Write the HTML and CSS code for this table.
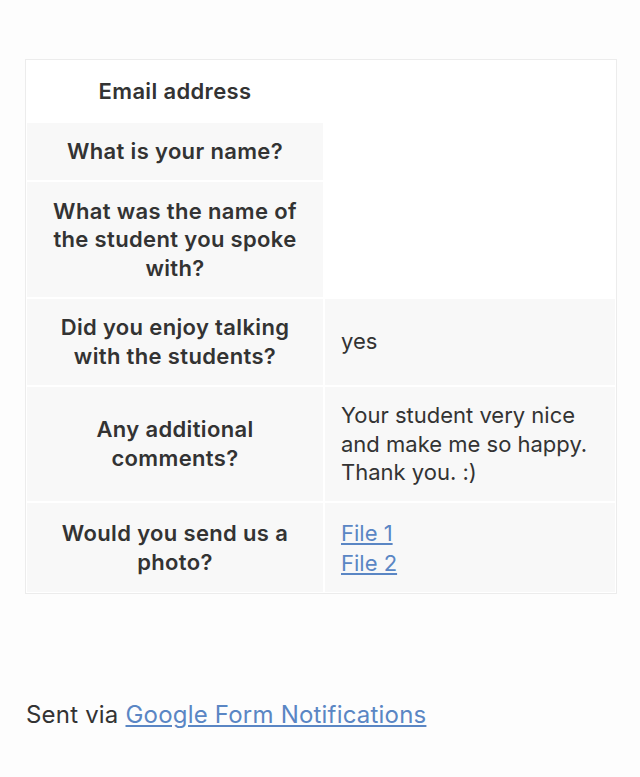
FILE: index.html
```html
<!DOCTYPE html>
<html>
<head>
<meta charset="utf-8">
<link rel="stylesheet" href="styles.css">
</head>
<body>
<div class="page">
  <div class="card">
    <table class="responses">
      <colgroup>
        <col class="col-label">
        <col class="col-value">
      </colgroup>
      <tr class="row-white">
        <th>Email address</th>
        <td></td>
      </tr>
      <tr class="row-half">
        <th>What is your name?</th>
        <td></td>
      </tr>
      <tr class="row-half">
        <th>What was the name of the student you spoke with?</th>
        <td></td>
      </tr>
      <tr>
        <th>Did you enjoy talking with the students?</th>
        <td>yes</td>
      </tr>
      <tr>
        <th>Any additional comments?</th>
        <td>Your student very nice and make me so happy. Thank you. :)</td>
      </tr>
      <tr>
        <th>Would you send us a photo?</th>
        <td class="files"><a href="#">File 1</a><br><a href="#">File 2</a></td>
      </tr>
    </table>
  </div>
  <p class="footer">Sent via <a href="#">Google Form Notifications</a></p>
</div>
</body>
</html>
```
FILE: styles.css
```css
html, body {
  margin: 0;
  padding: 0;
  background: #fdfdfd;
}
body {
  font-family: Inter, "Helvetica Neue", Arial, sans-serif;
  color: #333333;
}
.page {
  padding: 59px 23px 0 25px;
}
.card {
  border: 1px solid #ececec;
  background: #ffffff;
  width: 590px;
}
.responses {
  border-collapse: separate;
  border-spacing: 2px;
  margin: -1px;
  width: 592px;
  table-layout: fixed;
}
.col-label {
  width: 296px;
}
.col-value {
  width: 290px;
}
.responses th {
  font-size: 22px;
  font-weight: 600;
  letter-spacing: 0.35px;
  line-height: 28.5px;
  text-align: center;
  padding: 14.5px 18px;
  background: #f8f8f8;
  vertical-align: middle;
}
.responses td {
  font-size: 22px;
  font-weight: 400;
  line-height: 28.5px;
  padding: 14.5px 16px;
  background: #f8f8f8;
  vertical-align: middle;
  text-align: left;
}
.responses .row-white th,
.responses .row-white td {
  background: #ffffff;
  padding-top: 16px;
  padding-bottom: 15px;
}
.responses .row-half td {
  background: #ffffff;
}
.files {
  line-height: 30px !important;
}
a {
  color: #5a86c4;
  text-decoration: underline;
}
.footer {
  margin: 106px 0 0 1px;
  font-size: 24px;
  letter-spacing: 0.2px;
  line-height: 30px;
}
```
